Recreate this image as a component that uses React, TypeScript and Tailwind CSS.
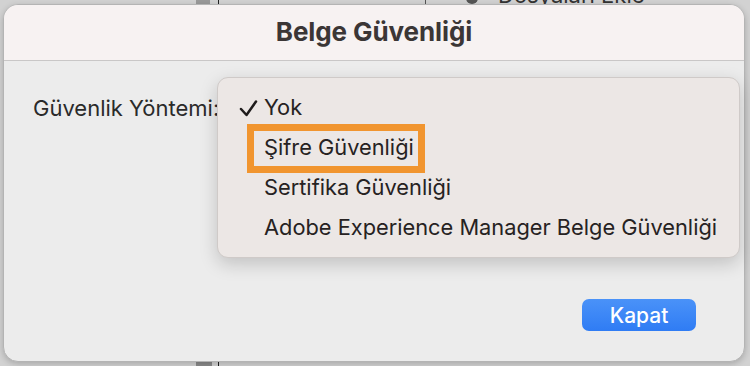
import React from "react";

export default function App() {
  const font = { fontFamily: "Inter, 'Noto Sans', sans-serif" };
  return (
    <div className="relative w-[750px] h-[366px] overflow-hidden bg-[#d2d2d2]" style={font}>
      {/* background app fragments (desktop behind the sheet) */}
      <div className="absolute left-0 top-0 w-[750px] h-[6px] flex items-start">
        <div className="ml-[196px] w-[14px] h-[6px] bg-[#9a9a9a]" />
        <div className="ml-[8px] w-[1px] h-[6px] bg-[#222]" />
        <div className="ml-[206px] w-[1px] h-[6px] bg-[#555]" />
        <div className="ml-[40px] -mt-[8px] w-[12px] h-[12px] rounded-full bg-[#555]" />
        <div className="ml-[20px] -mt-[16px] text-[22px] text-[#333] leading-none">Dosyaları Ekle</div>
      </div>
      <div className="absolute left-0 top-[360px] w-[750px] h-[6px] flex">
        <div className="ml-[196px] w-[16px] h-[6px] bg-[#8a8a8a]" />
        <div className="ml-[6px] w-[1px] h-[6px] bg-[#222]" />
      </div>

      {/* window */}
      <div className="absolute left-[3px] top-[4px] w-[742px] h-[358px] rounded-[15px] border border-[#b4b4b4] bg-[#ececec] overflow-hidden shadow-[0_2px_6px_rgba(0,0,0,0.2)] flex flex-col">
        <div className="h-[56px] shrink-0 bg-[#f7f2f2] border-b border-[#c9c7c7] flex items-center justify-center pb-[1px]">
          <span className="text-[26px] font-bold text-[#3b3636] tracking-[-0.1px] leading-none">Belge Güvenliği</span>
        </div>
        <div className="flex-1 flex flex-col pl-[29px] pt-[34px] pr-[48px] pb-[30px]">
          <div className="text-[22px] text-[#2a2a2a] leading-[27px]">Güvenlik Yöntemi:</div>
          <div className="flex-1" />
          <div className="self-end w-[114px] h-[32px] rounded-[7px] bg-gradient-to-b from-[#4a92f8] to-[#2f7cf4] flex items-center justify-center text-white text-[21px] font-medium leading-none">
            Kapat
          </div>
        </div>
      </div>

      {/* dropdown menu */}
      <div className="absolute left-[217px] top-[77px] w-[523px] h-[181px] rounded-[11px] bg-[#ece7e5] border border-[#cfcac8] shadow-[0_6px_18px_rgba(0,0,0,0.18)] flex flex-col pt-[10px] text-[21.8px] text-[#262222] leading-none">
        <div className="h-[40px] flex items-center">
          <span className="w-[46px] flex justify-end pr-[6px]">
            <svg width="19" height="17" viewBox="0 0 19 17">
              <path d="M2 9 L7.5 15 L17 1.5" fill="none" stroke="#1f1c1c" strokeWidth="2.5" strokeLinecap="round" strokeLinejoin="round" />
            </svg>
          </span>
          <span>Yok</span>
        </div>
        <div className="h-[40px] flex items-center pl-[29px]">
          <span className="border-[7px] border-[#f1952f] h-[49px] flex items-center pl-[10px] pr-[4px]">Şifre Güvenliği</span>
        </div>
        <div className="h-[40px] flex items-center pl-[46px]">Sertifika Güvenliği</div>
        <div className="h-[40px] flex items-center pl-[46px]">Adobe Experience Manager Belge Güvenliği</div>
      </div>
    </div>
  );
}
